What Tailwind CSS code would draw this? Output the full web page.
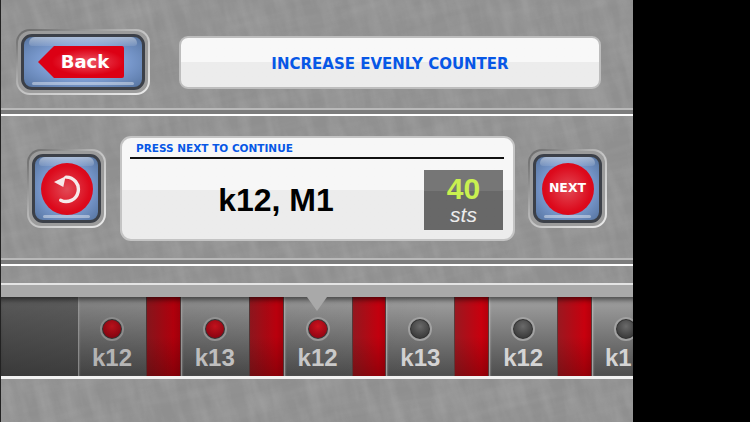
<!DOCTYPE html>
<html lang="en">
<head>
    <meta charset="UTF-8">
    <meta name="viewport" content="width=device-width, initial-scale=1.0">
    <title>Increase Evenly Counter</title>
    <script src="https://cdn.jsdelivr.net/npm/@tailwindcss/browser@4"></script>
</head>
<body class="bg-black w-[750px] h-[422px] overflow-hidden font-['Liberation_Sans',sans-serif]">
<div class="flex h-[422px]">
    <div class="w-px bg-[#222]"></div>

    <main class="relative w-[632px] h-[422px] overflow-hidden bg-[#8f8f8f]">
        <!-- brushed metal texture -->
        <svg class="absolute inset-0" width="632" height="422">
            <filter id="metal" x="0" y="0" width="100%" height="100%">
                <feTurbulence type="fractalNoise" baseFrequency="0.012 0.09" numOctaves="4" seed="7"/>
                <feColorMatrix values="0 0 0 0 0.42  0 0 0 0 0.42  0 0 0 0 0.42  1.8 0 0 0 -0.6"/>
            </filter>
            <filter id="metal2" x="0" y="0" width="100%" height="100%">
                <feTurbulence type="fractalNoise" baseFrequency="0.08 0.02" numOctaves="3" seed="3"/>
                <feColorMatrix values="0 0 0 0 0.68  0 0 0 0 0.68  0 0 0 0 0.68  1.6 0 0 0 -0.55"/>
            </filter>
            <rect x="-200" y="-300" width="1100" height="1100" filter="url(#metal)" transform="rotate(-14 316 211)" opacity="0.2"/>
            <rect x="-200" y="-300" width="1100" height="1100" filter="url(#metal2)" transform="rotate(-14 316 211)" opacity="0.18"/>
        </svg>

        <div class="relative flex flex-col">
            <!-- header -->
            <header class="flex items-start h-[108px] pt-[29px] pl-[15px]">
                <div class="w-[134px] h-[66px] rounded-[14px] p-[2px] bg-gradient-to-br from-[#666] via-[#c4c4c4] to-[#ececec]">
                    <div class="w-full h-full rounded-[12px] p-[3px] bg-[#9c9c9c]">
                        <button class="relative flex items-center justify-center w-full h-full rounded-[11px] border-[3px] border-[#3c4048] bg-[radial-gradient(ellipse_at_center,#a9c6f2_0%,#7d9dd2_50%,#55739f_100%)] overflow-hidden">
                            <span class="absolute top-0 left-[5px] right-[5px] h-[9px] rounded-t-lg rounded-b-sm bg-gradient-to-b from-white/45 to-white/10"></span>
                            <span class="absolute bottom-[2px] left-[8px] right-[8px] h-[3px] rounded-sm bg-white/40"></span>
                            <svg class="absolute left-[13px] top-[8px]" width="88" height="34" viewBox="0 0 88 34">
                                <defs>
                                    <radialGradient id="tag" cx="0.58" cy="0.5" r="0.42">
                                        <stop offset="0" stop-color="#ee5566"/>
                                        <stop offset="1" stop-color="#dc0014"/>
                                    </radialGradient>
                                </defs>
                                <path d="M1 17 L17 1 L85 1 Q87 1 87 3 L87 31 Q87 33 85 33 L17 33 Z" fill="url(#tag)"/>
                            </svg>
                            <span class="relative ml-[4px] font-['DejaVu_Sans',sans-serif] font-bold text-[18px] leading-none text-white">Back</span>
                        </button>
                    </div>
                </div>
                <div class="relative flex items-center justify-center ml-[29px] mt-[7px] w-[422px] h-[53px] rounded-[9px] border-2 border-[#bdbdbd] bg-gradient-to-b from-[#f8f8f8] from-50% to-[#ececec] to-50%">
                    <h1 class="mt-[4px] font-['DejaVu_Sans',sans-serif] font-bold text-[15px] leading-none text-[#0757e6]">INCREASE EVENLY COUNTER</h1>
                </div>
            </header>

            <div class="h-[8px] border-t-2 border-b-2 border-t-[#b9b9b9] border-b-white bg-[#7c7c7c]"></div>

            <!-- current instruction -->
            <section class="flex items-start h-[142px] pl-[26px]">
                <div class="mt-[33px] w-[79px] h-[79px] rounded-[14px] p-[2px] bg-gradient-to-br from-[#666] via-[#c4c4c4] to-[#ececec]">
                    <div class="w-full h-full rounded-[12px] p-[3px] bg-[#9c9c9c]">
                        <button class="relative flex items-center justify-center w-full h-full rounded-[11px] border-[3px] border-[#3c4048] bg-[radial-gradient(ellipse_at_center,#a9c6f2_0%,#7d9dd2_50%,#55739f_100%)] overflow-hidden">
                            <span class="absolute top-0 left-[4px] right-[4px] h-[9px] rounded-t-lg rounded-b-sm bg-gradient-to-b from-white/45 to-white/10"></span>
                            <span class="absolute bottom-[2px] left-[8px] right-[8px] h-[3px] rounded-sm bg-white/40"></span>
                            <span class="relative flex items-center justify-center w-[52px] h-[52px] rounded-full bg-[radial-gradient(circle_at_center,#e24a56_0%,#dc0a1c_62%,#dc0014_100%)]">
                                <svg width="30" height="30" viewBox="0 0 30 30" fill="none">
                                    <path d="M14 3.1 A12.2 12.2 0 1 1 8.7 26.2" stroke="#f6eaea" stroke-width="3.4" stroke-linecap="round"/>
                                    <path d="M2 8 L13.6 2.3 L11.3 13 Z" fill="#f6eaea"/>
                                </svg>
                            </span>
                        </button>
                    </div>
                </div>

                <div class="relative ml-[14px] mt-[20px] w-[395px] h-[105px] rounded-[11px] border-2 border-[#c4c4c4] bg-gradient-to-b from-[#f7f7f7] from-[51%] to-[#ececec] to-[51%]">
                    <p class="absolute left-[14px] top-[5px] font-['DejaVu_Sans',sans-serif] font-bold text-[10.5px] leading-none text-[#0757e6]">PRESS NEXT TO CONTINUE</p>
                    <div class="absolute left-[8px] right-[9px] top-[19px] h-[2px] bg-[#111]"></div>
                    <div class="flex items-start h-full pr-[10px]">
                        <p class="flex-1 text-center pl-[6px] mt-[46px] font-bold text-[32px] leading-none text-black">k12, M1</p>
                        <div class="flex flex-col items-center justify-center mt-[32px] w-[79px] h-[60px] bg-gradient-to-b from-[#767676] from-[35%] to-[#686868] to-[35%]">
                            <span class="font-bold text-[30px] leading-[30px] text-[#c9f050]">40</span>
                            <span class="italic text-[21px] leading-[22px] text-[#ececec]">sts</span>
                        </div>
                    </div>
                </div>

                <div class="ml-[13px] mt-[33px] w-[79px] h-[79px] rounded-[14px] p-[2px] bg-gradient-to-br from-[#666] via-[#c4c4c4] to-[#ececec]">
                    <div class="w-full h-full rounded-[12px] p-[3px] bg-[#9c9c9c]">
                        <button class="relative flex items-center justify-center w-full h-full rounded-[11px] border-[3px] border-[#3c4048] bg-[radial-gradient(ellipse_at_center,#a9c6f2_0%,#7d9dd2_50%,#55739f_100%)] overflow-hidden">
                            <span class="absolute top-0 left-[4px] right-[4px] h-[9px] rounded-t-lg rounded-b-sm bg-gradient-to-b from-white/45 to-white/10"></span>
                            <span class="absolute bottom-[2px] left-[8px] right-[8px] h-[3px] rounded-sm bg-white/40"></span>
                            <span class="relative flex items-center justify-center w-[52px] h-[52px] rounded-full bg-[radial-gradient(circle_at_center,#e24a56_0%,#dc0a1c_62%,#dc0014_100%)] font-['DejaVu_Sans',sans-serif] font-bold text-[12.5px] text-white">NEXT</span>
                        </button>
                    </div>
                </div>
            </section>

            <div class="h-[8px] border-t-2 border-b-2 border-t-[#b9b9b9] border-b-white bg-[#7c7c7c]"></div>

            <!-- stitch strip -->
            <section class="relative mt-[17px]">
                <div class="h-[14px] border-t-2 border-t-[#e4e4e4] bg-[#a9a9a9]"></div>
                <div class="absolute left-[306px] top-[14px] z-20 w-[20px] h-[14px] bg-[#a9a9a9] [clip-path:polygon(0_0,100%_0,50%_100%)]"></div>
                <div class="relative flex h-[79px] overflow-hidden">
                    <div class="shrink-0 w-[77px] bg-gradient-to-b from-[#707070] to-[#484848]"></div>

                    <div class="shrink-0 flex flex-col items-center w-[68px] bg-gradient-to-b from-[#a2a2a2] to-[#4e4e4e] shadow-[inset_2px_0_2px_-1px_#bbb]">
                        <span class="mt-[20px] flex items-center justify-center w-[24px] h-[24px] rounded-full border-2 border-[#a2a2a2] bg-[#3a3a3a]"><span class="w-[18px] h-[18px] rounded-full bg-[radial-gradient(circle_at_50%_35%,#d8141f,#8a0010)]"></span></span>
                        <span class="mt-[3px] font-bold text-[24px] leading-[28px] text-[#d4d4d4]">k12</span>
                    </div>
                    <div class="shrink-0 w-[34.8px] border-x border-x-[#5a3a3a] bg-[linear-gradient(to_bottom,#0000_50%,#3c000055),linear-gradient(to_right,#9a1820,#c8000e_80%,#b5000c)]"></div>

                    <div class="shrink-0 flex flex-col items-center w-[68px] bg-gradient-to-b from-[#a2a2a2] to-[#4e4e4e] shadow-[inset_2px_0_2px_-1px_#bbb]">
                        <span class="mt-[20px] flex items-center justify-center w-[24px] h-[24px] rounded-full border-2 border-[#a2a2a2] bg-[#3a3a3a]"><span class="w-[18px] h-[18px] rounded-full bg-[radial-gradient(circle_at_50%_35%,#d8141f,#8a0010)]"></span></span>
                        <span class="mt-[3px] font-bold text-[24px] leading-[28px] text-[#d4d4d4]">k13</span>
                    </div>
                    <div class="shrink-0 w-[34.8px] border-x border-x-[#5a3a3a] bg-[linear-gradient(to_bottom,#0000_50%,#3c000055),linear-gradient(to_right,#9a1820,#c8000e_80%,#b5000c)]"></div>

                    <div class="shrink-0 flex flex-col items-center w-[68px] bg-gradient-to-b from-[#a2a2a2] to-[#4e4e4e] shadow-[inset_2px_0_2px_-1px_#bbb]">
                        <span class="mt-[20px] flex items-center justify-center w-[24px] h-[24px] rounded-full border-2 border-[#a2a2a2] bg-[#3a3a3a]"><span class="w-[18px] h-[18px] rounded-full bg-[radial-gradient(circle_at_50%_35%,#d8141f,#8a0010)]"></span></span>
                        <span class="mt-[3px] font-bold text-[24px] leading-[28px] text-[#d4d4d4]">k12</span>
                    </div>
                    <div class="shrink-0 w-[34.8px] border-x border-x-[#5a3a3a] bg-[linear-gradient(to_bottom,#0000_50%,#3c000055),linear-gradient(to_right,#9a1820,#c8000e_80%,#b5000c)]"></div>

                    <div class="shrink-0 flex flex-col items-center w-[68px] bg-gradient-to-b from-[#a2a2a2] to-[#4e4e4e] shadow-[inset_2px_0_2px_-1px_#bbb]">
                        <span class="mt-[20px] flex items-center justify-center w-[24px] h-[24px] rounded-full border-2 border-[#a2a2a2] bg-[#333]"><span class="w-[18px] h-[18px] rounded-full bg-[radial-gradient(circle_at_50%_35%,#6a6a6a,#2e2e2e)]"></span></span>
                        <span class="mt-[3px] font-bold text-[24px] leading-[28px] text-[#d4d4d4]">k13</span>
                    </div>
                    <div class="shrink-0 w-[34.8px] border-x border-x-[#5a3a3a] bg-[linear-gradient(to_bottom,#0000_50%,#3c000055),linear-gradient(to_right,#9a1820,#c8000e_80%,#b5000c)]"></div>

                    <div class="shrink-0 flex flex-col items-center w-[68px] bg-gradient-to-b from-[#a2a2a2] to-[#4e4e4e] shadow-[inset_2px_0_2px_-1px_#bbb]">
                        <span class="mt-[20px] flex items-center justify-center w-[24px] h-[24px] rounded-full border-2 border-[#a2a2a2] bg-[#333]"><span class="w-[18px] h-[18px] rounded-full bg-[radial-gradient(circle_at_50%_35%,#6a6a6a,#2e2e2e)]"></span></span>
                        <span class="mt-[3px] font-bold text-[24px] leading-[28px] text-[#d4d4d4]">k12</span>
                    </div>
                    <div class="shrink-0 w-[34.8px] border-x border-x-[#5a3a3a] bg-[linear-gradient(to_bottom,#0000_50%,#3c000055),linear-gradient(to_right,#9a1820,#c8000e_80%,#b5000c)]"></div>

                    <div class="shrink-0 flex flex-col items-center w-[68px] bg-gradient-to-b from-[#a2a2a2] to-[#4e4e4e] shadow-[inset_2px_0_2px_-1px_#bbb]">
                        <span class="mt-[20px] flex items-center justify-center w-[24px] h-[24px] rounded-full border-2 border-[#a2a2a2] bg-[#333]"><span class="w-[18px] h-[18px] rounded-full bg-[radial-gradient(circle_at_50%_35%,#6a6a6a,#2e2e2e)]"></span></span>
                        <span class="self-start ml-[13px] mt-[3px] font-bold text-[24px] leading-[28px] text-[#d4d4d4]">k1</span>
                    </div>
                    <!-- strip gets darker toward the left -->
                    <div class="absolute inset-0 z-10 bg-gradient-to-r from-black/20 to-transparent to-[70%] shadow-[inset_0_6px_5px_-3px_#0008]"></div>
                </div>
                <div class="h-[3px] bg-[#f2f2f2]"></div>
            </section>
        </div>
    </main>
</div>
</body>
</html>
